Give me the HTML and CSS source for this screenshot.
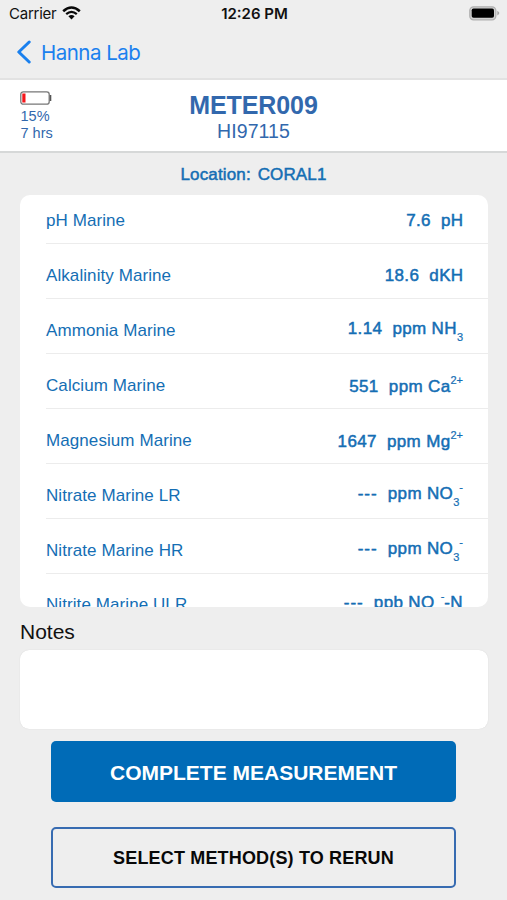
FILE: index.html
```html
<!DOCTYPE html>
<html lang="en">
<head>
<meta charset="utf-8">
<title>Hanna Lab</title>
<link rel="stylesheet" href="styles.css">
</head>
<body>
<div class="status">
  <div class="carrier"><span>Carrier</span>
    <svg class="wifi" width="19" height="14" viewBox="0 0 19 14" fill="none" stroke="#080808"><path d="M1.2 5.2Q9.5-2.2 17.8 5.2" stroke-width="2.6"/><path d="M4.2 8.2Q9.5 3.6 14.8 8.2" stroke-width="2.3"/><path d="M6.4 10.3Q9.5 7.7 12.6 10.3L9.5 13.5Z" fill="#080808" stroke="none"/></svg>
  </div>
  <span class="time">12:26 PM</span>
  <svg class="power" width="31" height="15" viewBox="0 0 31 15"><rect x=".8" y=".8" width="26" height="13" rx="3.8" fill="#d2d2d2" stroke="#b0b0b0" stroke-width="1.3"/><rect x="2.7" y="2.5" width="22.3" height="9.3" rx="1.8" fill="#000"/><path d="M28.3 4.7q4 2.4 0 4.8z" fill="#a5a5a5"/></svg>
</div>
<nav class="nav">
  <svg width="15" height="24" viewBox="0 0 15 24" fill="none" stroke="#1a80ee" stroke-width="3" stroke-linecap="round" stroke-linejoin="round"><path d="M13.2 2L2.8 12L13.2 22"/></svg>
  <span class="back">Hanna Lab</span>
</nav>
<header class="meter">
  <div class="charge">
    <svg width="32" height="14" viewBox="0 0 32 14"><rect x=".8" y=".8" width="28.4" height="12.4" rx="2.5" fill="#fff" stroke="#777" stroke-width="1.3"/><rect x="2.3" y="2.5" width="3.2" height="9" fill="#f5161b"/><path d="M29.7 4h1.6v6h-1.6z" fill="#555"/></svg>
    <span>15%</span><span>7 hrs</span>
  </div>
  <div class="title"><h1>METER009</h1><p>HI97115</p></div>
</header>
<div class="location">Location: CORAL1</div>
<main class="card">
  <div class="row"><span class="name">pH Marine</span><span class="value">7.6&nbsp; pH</span></div>
  <div class="row"><span class="name">Alkalinity Marine</span><span class="value">18.6&nbsp; dKH</span></div>
  <div class="row low"><span class="name">Ammonia Marine</span><span class="value">1.14&nbsp; ppm NH<sub>3</sub></span></div>
  <div class="row high"><span class="name">Calcium Marine</span><span class="value">551&nbsp; ppm Ca<sup>2+</sup></span></div>
  <div class="row high"><span class="name">Magnesium Marine</span><span class="value">1647&nbsp; ppm Mg<sup>2+</sup></span></div>
  <div class="row both"><span class="name">Nitrate Marine LR</span><span class="value"><i>---</i>&nbsp; ppm NO<sub>3</sub><sup>-</sup></span></div>
  <div class="row both"><span class="name">Nitrate Marine HR</span><span class="value"><i>---</i>&nbsp; ppm NO<sub>3</sub><sup>-</sup></span></div>
  <div class="row both last"><span class="name">Nitrite Marine ULR</span><span class="value"><i>---</i>&nbsp; ppb NO<sub>2</sub><sup>-</sup>-N</span></div>
</main>
<h2 class="notes-label">Notes</h2>
<div class="notes"></div>
<div class="actions">
  <button class="primary">COMPLETE MEASUREMENT</button>
  <button class="secondary">SELECT METHOD(S) TO RERUN</button>
</div>
</body>
</html>
```
FILE: styles.css
```css
* { box-sizing: border-box; }
body { margin: 0; height: 900px; overflow: hidden; background: #eee; font-family: "Liberation Sans", Arial, sans-serif; color: #146eb4; }
h1, h2, p { margin: 0; font-weight: 400; }
svg { display: block; flex: none; }

.status { height: 28px; display: grid; grid-template-columns: 1fr auto 1fr; align-items: center; padding: 0 7px 0 9px; color: #111; font: 15px/28px Inter, sans-serif; }
.carrier { display: flex; align-items: center; gap: 6px; letter-spacing: -.25px; }
.wifi { margin-top: -2px; }
.time { font-weight: 600; }
.power { justify-self: end; margin-top: -1px; }

.nav { height: 52px; display: flex; align-items: center; padding: 0 0 3px 16px; gap: 10px; border-bottom: 2px solid #e2e2e2; color: #1a80ee; }
.back { font: 20.5px/28px Inter, sans-serif; letter-spacing: -.5px; padding-top: 2px; }

.meter { height: 73px; display: grid; grid-template-columns: 60px 1fr 60px; padding: 0 20px; background: #fff; border-bottom: 2px solid #d6d8d8; color: #3268ad; }
.charge { display: flex; flex-direction: column; padding-top: 11px; font-size: 14.5px; line-height: 17px; }
.charge svg { margin-bottom: 3px; }
.charge span { padding-left: .5px; }
.title { text-align: center; padding-top: 10px; }
.title h1 { font-size: 25px; line-height: 30px; font-weight: 700; letter-spacing: -.1px; }
.title p { font-size: 19.5px; line-height: 22px; letter-spacing: .1px; }

.location { height: 42px; line-height: 43px; text-align: center; font-size: 17px; letter-spacing: .15px; word-spacing: 2px; -webkit-text-stroke: .5px currentColor; }

.card { height: 412px; margin: 0 20px; width: 467.5px; border-radius: 10px; background: #fff; overflow: hidden; }
.row { height: 55px; margin-left: 26px; padding: 9px 24px 0 0; display: flex; align-items: center; justify-content: space-between; border-bottom: 1px solid #ececec; font-size: 17px; line-height: 20px; }
.row:first-child { height: 49px; padding-top: 3px; }
.row.last { padding-top: 7px; }
.name { letter-spacing: .08px; }
.value { letter-spacing: .35px; white-space: nowrap; -webkit-text-stroke: .5px currentColor; }
.value i { font-style: normal; letter-spacing: 1px; }
.value sub, .value sup { font-size: 11px; line-height: 0; letter-spacing: 0; -webkit-text-stroke: .2px currentColor; }
.value sub { vertical-align: -7px; }
.value sup { vertical-align: 8px; }
.low .value, .both .value { margin: -3px .5px 0 0; }
.high .value { margin: 3px .5px 0 0; }

.notes-label { height: 43px; padding: 2px 0 0 20px; font-size: 21px; line-height: 46px; color: #111; }
.notes { height: 79px; margin: 0 20px; width: 467.5px; border-radius: 9px; background: #fff; box-shadow: 0 0 1px #ccc; }
.actions { display: flex; flex-direction: column; gap: 25px; padding: 12px 51px 0; }
.actions button { height: 61px; padding: 2px 0 0; border-radius: 5px; font-family: inherit; font-weight: 700; }
.primary { border: 0; background: #006bb7; color: #fff; font-size: 21px; }
.secondary { border: 2px solid #376bb1 !important; background: transparent; color: #080808; font-size: 18px; letter-spacing: .17px; }
```
